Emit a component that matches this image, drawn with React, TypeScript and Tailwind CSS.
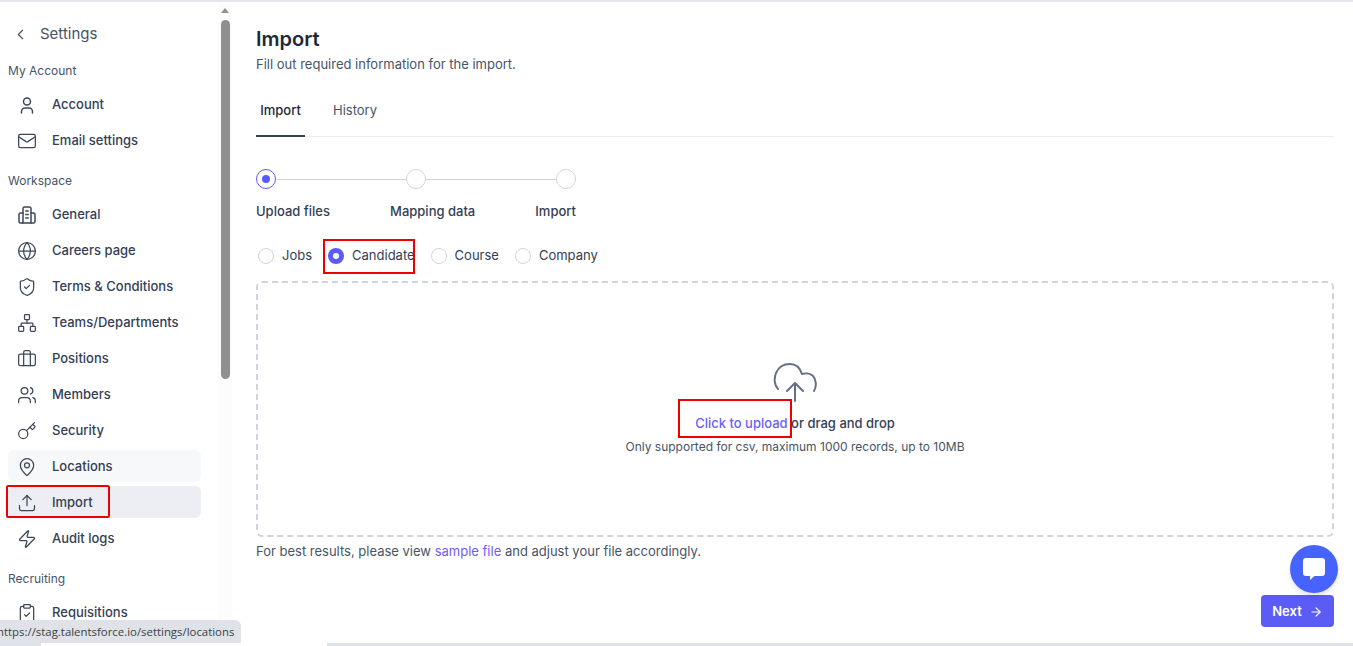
import { ArrowRight, Briefcase, ChevronLeft, ClipboardCheck, Globe, Key, Mail, MapPin, Network, ShieldCheck, Upload, Users, Zap } from "lucide-react";
import type { ReactNode } from "react";

function BuildingIcon() {
  return (
    <svg width="20" height="20" viewBox="0 0 20 20" fill="none" stroke="currentColor" strokeWidth="1.5" strokeLinecap="round" strokeLinejoin="round">
      <path d="M6 18V3.500A1.500 1.500 0 0 1 7.500 2h5A1.500 1.500 0 0 1 14 3.500V18" />
      <path d="M6 8H3.500A1.500 1.500 0 0 0 2 9.500V16.500A1.500 1.500 0 0 0 3.500 18h13a1.500 1.500 0 0 0 1.500-1.500V9.500A1.500 1.500 0 0 0 16.500 8H14" />
      <path d="M8.800 6h2.400M8.800 9.500h2.400M8.800 13h2.400" />
    </svg>
  );
}

function UserIcon() {
  return (
    <svg width="20" height="20" viewBox="0 0 20 20" fill="none" stroke="currentColor" strokeWidth="1.5" strokeLinecap="round" strokeLinejoin="round">
      <circle cx="10" cy="6.500" r="3.500" />
      <path d="M4.500 18v-1.500A3.500 3.500 0 0 1 8 13h4a3.500 3.500 0 0 1 3.500 3.500V18" />
    </svg>
  );
}

function NavItem({ icon, label, className = "" }: { icon: ReactNode; label: string; className?: string }) {
  return (
    <div className={`flex h-8 items-center rounded-md pl-[9px] pt-[2px] text-[13px] font-medium text-[#344054] ${className}`}>
      <span className="flex w-[20px] justify-center text-[#3d4759]">{icon}</span>
      <span className="ml-[15px]">{label}</span>
    </div>
  );
}

function SectionLabel({ children, className = "" }: { children: ReactNode; className?: string }) {
  return <div className={`pl-2 text-xs leading-4 text-[#475467] ${className}`}>{children}</div>;
}

function Radio({ checked }: { checked?: boolean }) {
  return checked ? (
    <span className="flex h-4 w-4 shrink-0 items-center justify-center rounded-full bg-[#5b5bf6]">
      <span className="h-1.5 w-1.5 rounded-full bg-white" />
    </span>
  ) : (
    <span className="block h-4 w-4 shrink-0 rounded-full border border-[#d0d5dd] bg-white" />
  );
}

function Step({ active }: { active?: boolean }) {
  return (
    <span className={`flex h-5 w-5 shrink-0 items-center justify-center rounded-full border bg-white ${active ? "border-[#5b5bf6]" : "border-[#d0d5dd]"}`}>
      {active && <span className="h-2 w-2 rounded-full bg-[#5b5bf6]" />}
    </span>
  );
}

export default function App() {
  const ic = { size: 20, strokeWidth: 1.5 };
  return (
    <div className="relative flex h-[646px] w-[1353px] overflow-hidden border-t-2 border-[#e4e7ec] bg-white font-['Inter',sans-serif]">
      {/* Sidebar */}
      <aside className="w-[218px] shrink-0 overflow-hidden pl-2 pr-[17px]">
        <div className="mt-[20px] flex h-6 items-center pl-[4px] text-[#475467]">
          <ChevronLeft size={17} strokeWidth={1.6} />
          <span className="ml-[11px] text-[15px] text-[#475467]">Settings</span>
        </div>
        <SectionLabel className="-ml-2 mt-[17px]">My Account</SectionLabel>
        <div className="mt-[9px] flex flex-col gap-1">
          <NavItem icon={<UserIcon />} label="Account" />
          <NavItem icon={<Mail {...ic} />} label="Email settings" />
        </div>
        <SectionLabel className="-ml-2 mt-[17px]">Workspace</SectionLabel>
        <div className="mt-[9px] flex flex-col gap-1">
          <NavItem icon={<BuildingIcon />} label="General" />
          <NavItem icon={<Globe {...ic} />} label="Careers page" />
          <NavItem icon={<ShieldCheck {...ic} />} label="Terms & Conditions" />
          <NavItem icon={<Network {...ic} />} label="Teams/Departments" />
          <NavItem icon={<Briefcase {...ic} />} label="Positions" />
          <NavItem icon={<Users {...ic} />} label="Members" />
          <NavItem icon={<Key {...ic} />} label="Security" />
          <NavItem icon={<MapPin {...ic} />} label="Locations" className="bg-[#f7f8fa]" />
          <NavItem icon={<Upload {...ic} />} label="Import" className="bg-[#eceef3]" />
          <NavItem icon={<Zap {...ic} />} label="Audit logs" />
        </div>
        <SectionLabel className="-ml-2 mt-[17px]">Recruiting</SectionLabel>
        <div className="mt-[9px] flex flex-col gap-1">
          <NavItem icon={<ClipboardCheck {...ic} />} label="Requisitions" />
        </div>
      </aside>

      {/* Scrollbar */}
      <div className="flex w-[14px] shrink-0 flex-col items-center bg-[#fcfcfc]">
        <span className="mt-[6px] h-0 w-0 border-x-[4px] border-b-[5px] border-x-transparent border-b-[#8f8f8f]" />
        <span className="mt-[7px] h-[359px] w-[9px] rounded-full bg-[#8f8f8f]" />
      </div>

      {/* Main */}
      <main className="flex min-w-0 flex-1 flex-col pl-6 pr-[19px] pt-[25px]">
        <h1 className="text-xl font-semibold leading-6 text-[#1d2939]">Import</h1>
        <p className="mt-[3px] text-[13px] leading-5 text-[#475467]">Fill out required information for the import.</p>

        <div className="mt-[26px] flex h-[37px] border-b border-[#eaecf0] text-[13px]">
          <div className="-mb-px flex w-[49px] justify-center border-b-2 border-[#344054] pt-[1px] font-medium text-[#1d2939]">Import</div>
          <div className="ml-[28px] pt-[1px] text-[#475467]">History</div>
        </div>

        {/* Stepper */}
        <div className="mt-[32px] flex w-[320px] items-center">
          <Step active />
          <span className="h-px w-[130px] bg-[#d0d5dd]" />
          <Step />
          <span className="h-px w-[130px] bg-[#d0d5dd]" />
          <Step />
        </div>
        <div className="mt-[13px] flex h-5 w-[320px] items-center justify-between text-[13px] font-medium text-[#344054]">
          <span>Upload files</span>
          <span>Mapping data</span>
          <span>Import</span>
        </div>

        {/* Type */}
        <div className="mt-[24px] flex h-5 items-center pl-[2px] text-[13px] text-[#344054]">
          <Radio />
          <span className="ml-2">Jobs</span>
          <span className="ml-4"><Radio checked /></span>
          <span className="ml-2">Candidate</span>
          <span className="ml-4"><Radio /></span>
          <span className="ml-2">Course</span>
          <span className="ml-4"><Radio /></span>
          <span className="ml-2">Company</span>
        </div>

        {/* Dropzone */}
        <div className="mt-[15px] flex h-[256px] flex-col items-center rounded-md border-2 border-dashed border-[#d0d5dd] pt-[80px]">
          <svg width="44" height="40" viewBox="0 0 44 40" fill="none" stroke="#667085" strokeWidth="2" strokeLinecap="round" strokeLinejoin="round">
            <path d="M5 26C1 22 1 15 3 10C6 3 12 1 17 1C23 1 27 5 29 11C32 10 37 10 40 13C43 16 44 23 41 28" />
            <path d="M22 38V20M14 28L22 20L30 28" />
          </svg>
          <div className="mt-[10px] text-[13px] font-medium leading-5 text-[#344054]">
            <span className="text-[#6d5ef6]">Click to upload</span> or drag and drop
          </div>
          <div className="mt-[4px] text-xs leading-5 text-[#475467]">Only supported for csv, maximum 1000 records, up to 10MB</div>
        </div>
        <p className="mt-[4px] text-[13px] leading-5 text-[#475467]">
          For best results, please view <span className="text-[#6d5ef6]">sample file</span> and adjust your file accordingly.
        </p>
        <div className="mt-[34px] flex justify-end">
          <button className="flex h-8 w-[73px] items-center justify-center gap-[7px] rounded bg-[#5b5bf6] pt-[1px] text-[13px] font-semibold text-white">
            Next <ArrowRight size={14} strokeWidth={2} />
          </button>
        </div>
      </main>

      {/* Chat bubble */}
      <div className="absolute left-[1290px] top-[543px] flex h-12 w-12 items-center justify-center rounded-full bg-[#4763ff] shadow-md">
        <svg width="24" height="24" viewBox="0 0 24 24" fill="white">
          <path d="M4 1h16a3 3 0 0 1 3 3v12a3 3 0 0 1-3 3h-7.500l-4.500 4v-4H4a3 3 0 0 1-3-3V4a3 3 0 0 1 3-3z" />
        </svg>
      </div>

      {/* Annotation rectangles */}
      <div className="absolute left-[6px] top-[483px] h-[33px] w-[104px] rounded-[2px] border-2 border-[#ee0000]" />
      <div className="absolute left-[323px] top-[237px] h-[35px] w-[92px] border-2 border-[#ee0000]" />
      <div className="absolute left-[678px] top-[397px] h-[39px] w-[114px] border-2 border-[#ee0000]" />

      {/* Browser status bubble */}
      <div className="absolute left-0 top-[618px] z-10 flex h-[23px] w-[241px] items-center overflow-hidden whitespace-nowrap rounded-tr-md bg-[#dfe3e8] font-['Open_Sans',sans-serif] text-[11.4px] text-[#3c4043]">
        <span className="-ml-[3px]">https://stag.talentsforce.io/settings/locations</span>
      </div>
      <div className="absolute bottom-0 left-0 flex h-[3px] w-full bg-[#dee1e7]">
        <span className="ml-[41px] h-full w-[286px] bg-white" />
      </div>
    </div>
  );
}
